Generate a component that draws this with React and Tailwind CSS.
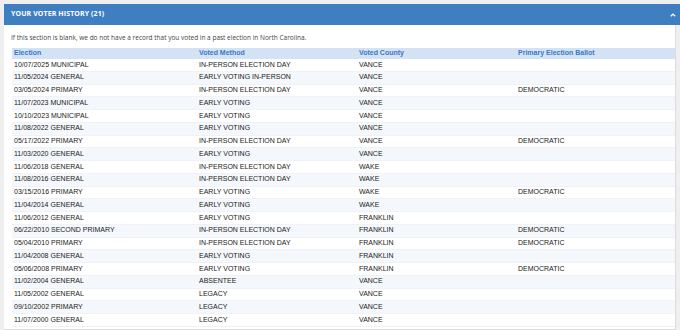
import React from "react";

const ROWS = [
  ["10/07/2025 MUNICIPAL", "IN-PERSON ELECTION DAY", "VANCE", ""],
  ["11/05/2024 GENERAL", "EARLY VOTING IN-PERSON", "VANCE", ""],
  ["03/05/2024 PRIMARY", "IN-PERSON ELECTION DAY", "VANCE", "DEMOCRATIC"],
  ["11/07/2023 MUNICIPAL", "EARLY VOTING", "VANCE", ""],
  ["10/10/2023 MUNICIPAL", "EARLY VOTING", "VANCE", ""],
  ["11/08/2022 GENERAL", "EARLY VOTING", "VANCE", ""],
  ["05/17/2022 PRIMARY", "IN-PERSON ELECTION DAY", "VANCE", "DEMOCRATIC"],
  ["11/03/2020 GENERAL", "EARLY VOTING", "VANCE", ""],
  ["11/06/2018 GENERAL", "IN-PERSON ELECTION DAY", "WAKE", ""],
  ["11/08/2016 GENERAL", "IN-PERSON ELECTION DAY", "WAKE", ""],
  ["03/15/2016 PRIMARY", "EARLY VOTING", "WAKE", "DEMOCRATIC"],
  ["11/04/2014 GENERAL", "EARLY VOTING", "WAKE", ""],
  ["11/06/2012 GENERAL", "EARLY VOTING", "FRANKLIN", ""],
  ["06/22/2010 SECOND PRIMARY", "IN-PERSON ELECTION DAY", "FRANKLIN", "DEMOCRATIC"],
  ["05/04/2010 PRIMARY", "IN-PERSON ELECTION DAY", "FRANKLIN", "DEMOCRATIC"],
  ["11/04/2008 GENERAL", "EARLY VOTING", "FRANKLIN", ""],
  ["05/06/2008 PRIMARY", "EARLY VOTING", "FRANKLIN", "DEMOCRATIC"],
  ["11/02/2004 GENERAL", "ABSENTEE", "VANCE", ""],
  ["11/05/2002 GENERAL", "LEGACY", "VANCE", ""],
  ["09/10/2002 PRIMARY", "LEGACY", "VANCE", ""],
  ["11/07/2000 GENERAL", "LEGACY", "VANCE", ""],
];

const HEADS = ["Election", "Voted Method", "Voted County", "Primary Election Ballot"];

const COLS = "grid grid-cols-[185px_160px_159px_1fr]";

export default function App() {
  return (
    <div className="w-[680px] h-[330px] overflow-hidden bg-[#efefef] pt-[4px] pl-[4px]">
      {/* panel header */}
      <div className="h-[21px] bg-[#3f7fc1] flex items-center justify-between pl-[7px] pr-[4px] font-['Open_Sans',sans-serif]">
        <span className="text-white text-[7px] font-bold tracking-[0.1px]">
          YOUR VOTER HISTORY (21)
        </span>
        <svg width="6" height="4" viewBox="0 0 6 4" aria-hidden="true">
          <path d="M0.8 3.3L3 1.1l2.2 2.2" stroke="white" strokeWidth="1.3" fill="none" />
        </svg>
      </div>

      {/* panel body */}
      <div className="w-[672px] bg-white border-r border-b border-[#dcdcdc] pt-[8px] pl-[8px] pb-[2px]">
        <p className="text-[6.5px] text-[#444] font-['Open_Sans',sans-serif] leading-[10px] -ml-[1px]">
          If this section is blank, we do not have a record that you voted in a past election in North Carolina.
        </p>

        <div className="mt-[5px] font-['Liberation_Sans',Arial,sans-serif] text-[7px]">
          <div className={`${COLS} h-[11px] items-center bg-[#d3e3f4] text-[#3a78c4] font-bold`}>
            {HEADS.map((h) => (
              <div key={h} className="pl-[2px]">
                {h}
              </div>
            ))}
          </div>
          {ROWS.map((r, i) => (
            <div
              key={i}
              className={`${COLS} h-[12.75px] items-center text-[#222] border-b border-[#f0f2f5] ${
                i % 2 === 1 ? "bg-[#f4f7fb]" : "bg-white"
              }`}
            >
              {r.map((c, j) => (
                <div key={j} className="pl-[2px] whitespace-nowrap">
                  {c}
                </div>
              ))}
            </div>
          ))}
        </div>
      </div>
    </div>
  );
}
